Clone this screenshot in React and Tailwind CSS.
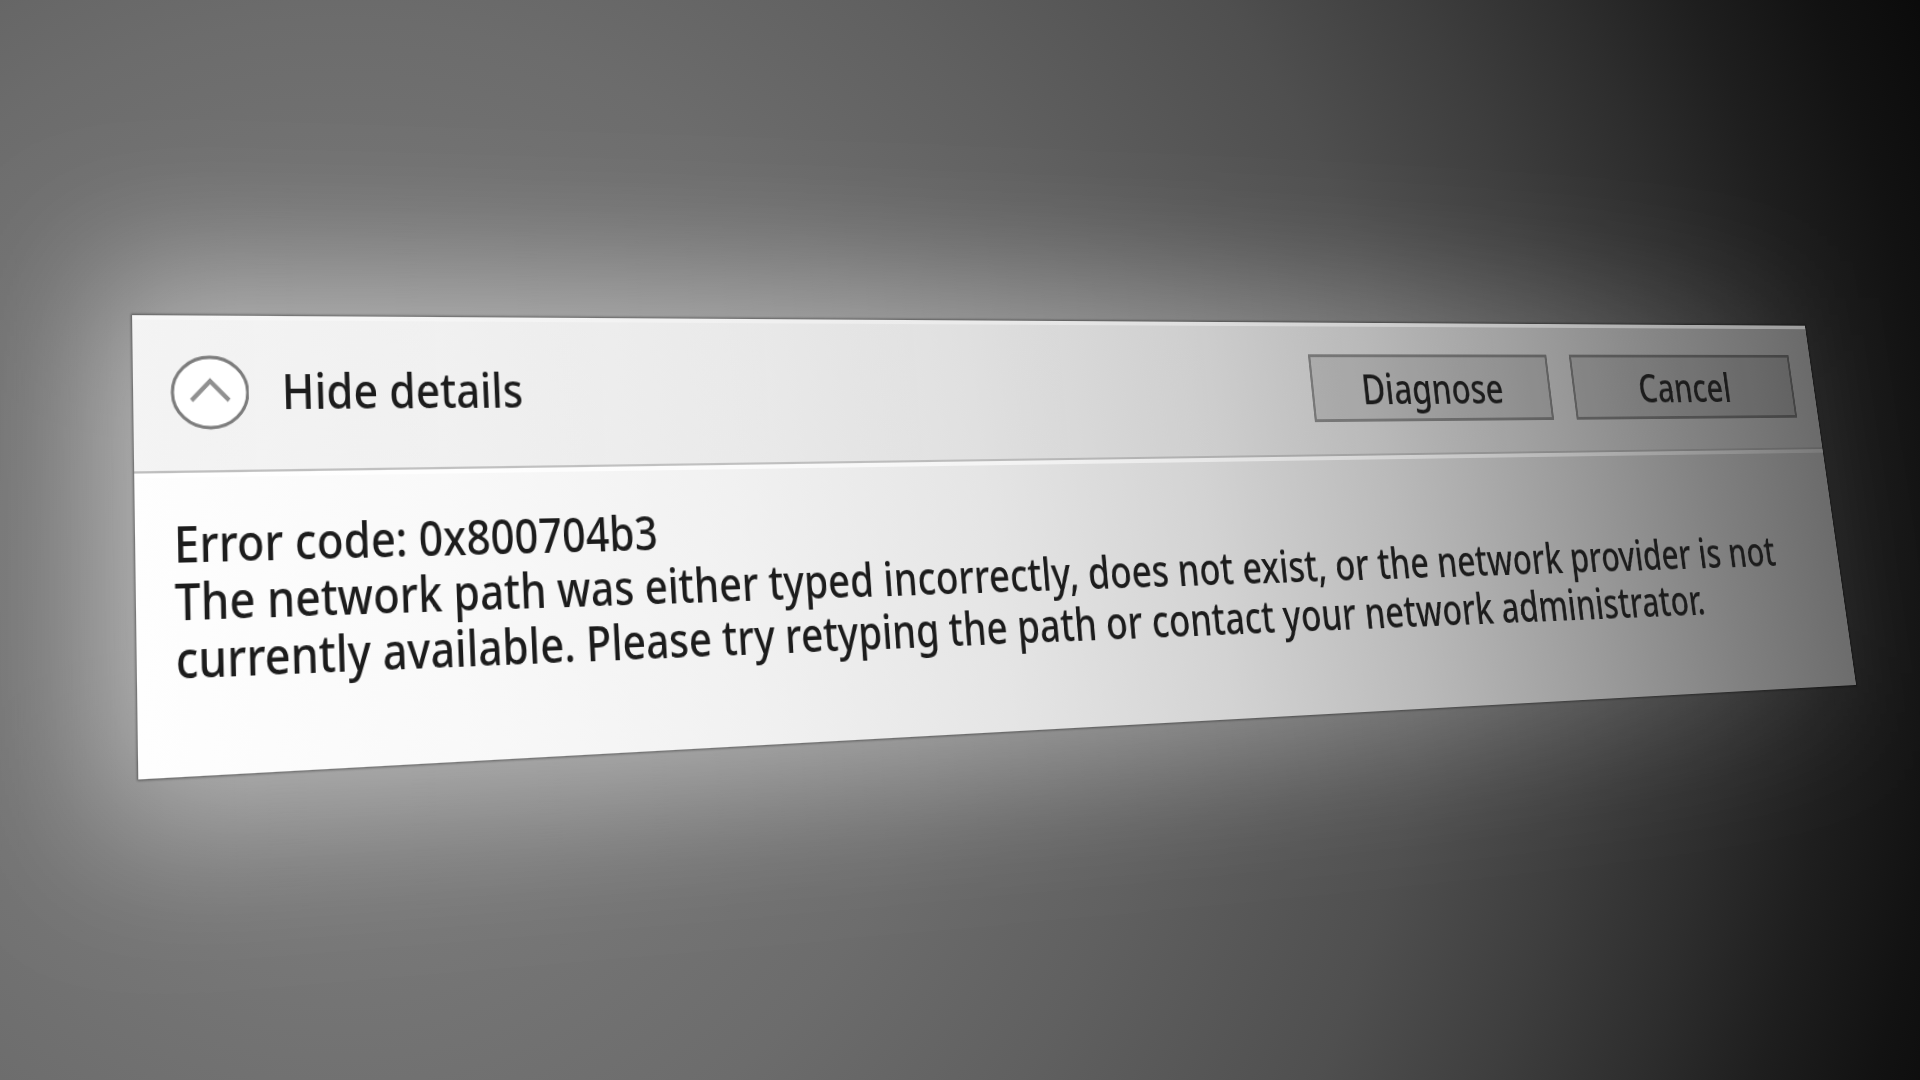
import { useState } from "react";

function ActionButton({ children }) {
  return (
    <button
      type="button"
      className="h-[70px] w-[326px] border-3 border-black/30 bg-black/10 text-[43px] leading-none font-medium text-[#1c1c1c]"
    >
      {children}
    </button>
  );
}

function DetailsToggle({ open, onToggle }) {
  return (
    <button
      type="button"
      aria-expanded={open}
      aria-controls="error-details"
      onClick={onToggle}
      className="flex items-center gap-8 text-[43px] leading-none font-medium text-[#1c1c1c]"
    >
      <svg viewBox="0 0 78 66" className="h-[66px] w-[78px]" fill="none" aria-hidden="true">
        <ellipse cx="41" cy="33" rx="36" ry="31" fill="#fff" stroke="#7c7c7c" strokeWidth="3" />
        <path d={open ? "M23 40 41 23 59 40" : "M23 25 41 42 59 25"} stroke="#909090" strokeWidth="4" />
      </svg>
      <span className="pb-1">Hide details</span>
    </button>
  );
}

export default function App() {
  const [open, setOpen] = useState(true);

  return (
    <main className="flex min-h-screen items-center overflow-hidden bg-[radial-gradient(circle_at_340px_620px,#7c7c7c_0px,#777777_300px,#6c6c6c_600px,#606060_820px,#4f4f4f_1080px,#3e3e3e_1240px,#2d2d2d_1380px,#1e1e1e_1490px,#121212_1600px,#090909_1720px)] pb-10 font-['Noto_Sans','Open_Sans',sans-serif] perspective-[4243px] perspective-origin-[50%_-568px]">
      <div className="relative mr-[-181px] ml-[78px] flex-1 rotate-x-[22.2deg] rotate-y-[32.4deg] rotate-z-[-5.3deg]">
        <div className="absolute -inset-8 bg-[linear-gradient(90deg,rgba(255,255,255,0.48)_0%,rgba(255,255,255,0.46)_30%,rgba(255,255,255,0.34)_60%,rgba(255,255,255,0.16)_85%,rgba(255,255,255,0.02)_100%)] blur-[64px]" />
        <section
          aria-label="Network error"
          className="relative bg-[linear-gradient(87deg,#fefefe_0%,#f9f9f9_15%,#f1f1f1_30%,#e5e5e5_44%,#d3d3d3_57%,#bababa_69%,#9b9b9b_81%,#808080_91%,#6a6a6a_100%)] shadow-[0_0_2px_1px_rgba(0,0,0,0.4)]"
        >
          <header className="flex h-[136px] items-center justify-between bg-linear-to-r from-black/4 to-transparent px-8 shadow-[inset_0_4px_0_rgba(255,255,255,0.35)]">
            <DetailsToggle open={open} onToggle={() => setOpen(!open)} />
            <div className="flex gap-8">
              <ActionButton>Diagnose</ActionButton>
              <ActionButton>Cancel</ActionButton>
            </div>
          </header>
          <div className="h-[2px] bg-linear-to-r from-black/25 to-black/10" />
          <div className="h-[4px] bg-linear-to-r from-white to-white/10" />
          <div
            id="error-details"
            className="h-[253px] px-9 pt-8 text-[43px] leading-[49px] font-medium text-[#1c1c1c]"
          >
            {open && (
              <>
                <p>Error code: 0x800704b3</p>
                <p>
                  The network path was either typed incorrectly, does not exist, or the network provider is not
                  currently available. Please try retyping the path or contact your network administrator.
                </p>
              </>
            )}
          </div>
        </section>
      </div>
    </main>
  );
}
